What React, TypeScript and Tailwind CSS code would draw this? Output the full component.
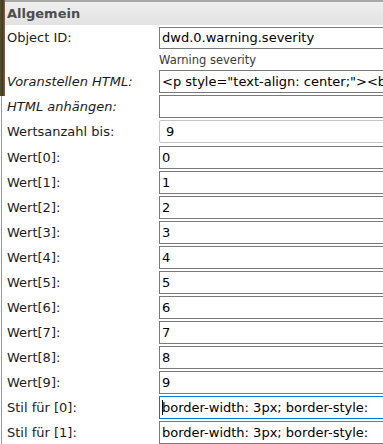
import React from "react";

const font = { fontFamily: '"DejaVu Sans", Verdana, sans-serif' };

type Row = {
  label: string;
  value: string;
  italic?: boolean;
  kind?: "plain" | "soft" | "focus";
};

const wertRows: Row[] = Array.from({ length: 10 }, (_, i) => ({
  label: `Wert[${i}]:`,
  value: String(i),
}));

const Field = ({ value, kind = "plain" }: { value: string; kind?: Row["kind"] }) => {
  const box =
    kind === "soft"
      ? "border-[#c4c4c4] rounded-[2px] pl-[6px]"
      : kind === "focus"
        ? "border-[#0078d7] pl-[2px]"
        : "border-[#7a7a7a] pl-[2px]";
  return (
    <div
      className={`relative flex h-full w-[260px] shrink-0 items-center overflow-hidden whitespace-nowrap border bg-white text-[13px] text-black ${box}`}
    >
      {kind === "focus" && (
        <span className="absolute left-[2px] top-[3px] h-[15px] w-px bg-black" />
      )}
      {value}
    </div>
  );
};

const FormRow = ({ row, className }: { row: Row; className: string }) => (
  <div className={`flex items-center ${className}`}>
    <div
      className={`w-[154px] shrink-0 pl-[2px] text-[13px] text-[#1c1c1c] ${row.italic ? "italic" : ""}`}
    >
      {row.label}
    </div>
    <Field value={row.value} kind={row.kind} />
  </div>
);

export default function App() {
  return (
    <div className="flex h-[444px] w-[383px] overflow-hidden bg-white" style={font}>
      {/* page background peeking in on the left */}
      <div className="flex w-[5px] shrink-0 flex-col">
        <div className="h-[96px] bg-gradient-to-r from-[#3d5a2a] via-[#5a2f2a] to-[#7a6a4a]" />
        <div className="ml-px flex-1 border-l border-[#9a9a9a]" />
      </div>

      <div className="flex min-w-0 flex-1 flex-col">
        <div className="flex h-[25px] shrink-0 items-center border-t-2 border-[#a8a8a8] bg-gradient-to-b from-[#efefef] to-[#e2e2e2] pl-[2px] text-[13px] font-bold text-[#4d4d4d]">
          Allgemein
        </div>

        <FormRow
          row={{ label: "Object ID:", value: "dwd.0.warning.severity" }}
          className="mt-[2px] h-[22px]"
        />
        <div className="flex h-[21px] items-center pl-[154px] pt-[2px] text-[11.5px] text-[#3a3a3a]">
          Warning severity
        </div>
        <FormRow
          row={{
            label: "Voranstellen HTML:",
            value: '<p style="text-align: center;"><b',
            italic: true,
          }}
          className="h-[23px]"
        />
        <FormRow
          row={{ label: "HTML anhängen:", value: "", italic: true }}
          className="mt-[2px] h-[23px]"
        />
        <FormRow
          row={{ label: "Wertsanzahl bis:", value: "9", kind: "soft" }}
          className="mt-[2px] h-[23px]"
        />
        <div className="mt-[1px] flex flex-col">
          {wertRows.map((r) => (
            <FormRow key={r.label} row={r} className="mt-[2px] h-[23px]" />
          ))}
          <FormRow
            row={{
              label: "Stil für [0]:",
              value: "border-width: 3px; border-style:",
              kind: "focus",
            }}
            className="mt-[2px] h-[23px]"
          />
          <FormRow
            row={{ label: "Stil für [1]:", value: "border-width: 3px; border-style:" }}
            className="mt-[2px] h-[23px]"
          />
        </div>
      </div>
    </div>
  );
}
